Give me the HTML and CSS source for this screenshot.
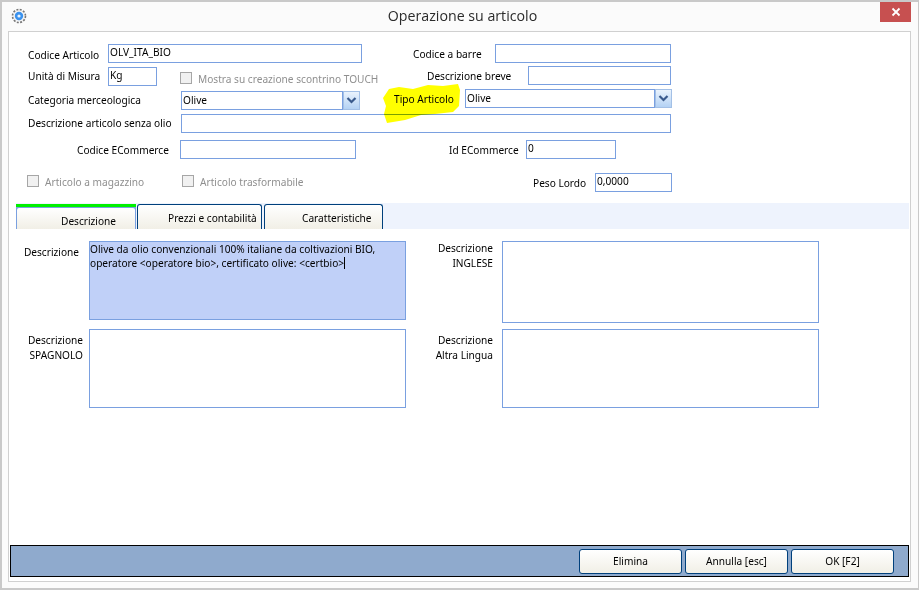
FILE: index.html
```html
<!DOCTYPE html>
<html lang="en">

<head>
  <title>Operazione su articolo</title>
  <meta charset="UTF-8" />
  <link rel="stylesheet" href="styles.css">
</head>

<body>
  <div class="window">
    <div class="titlebar">
      <svg class="app-icon" width="16" height="16" viewBox="0 0 16 16">
        <circle cx="8" cy="8" r="6.5" fill="#f4f4f4" stroke="#777" stroke-width="1.6" stroke-dasharray="2 1.4" />
        <circle cx="8" cy="8" r="4.2" fill="#3b92ee" />
        <circle cx="8" cy="8" r="1.6" fill="#e8f4ff" />
      </svg>
      <span class="title">Operazione su articolo</span>
      <div class="close">
        <svg width="10" height="10" viewBox="0 0 10 10">
          <path d="M1.5 1.5 8.5 8.5M8.5 1.5 1.5 8.5" stroke="#fff" stroke-width="1.8" />
        </svg>
      </div>
    </div>

    <div class="client">
      <div class="row row-1">
        <label class="lbl lbl-codice mt2">Codice Articolo</label>
        <div class="field f-codice">OLV_ITA_BIO</div>
        <label class="lbl lbl-barre mt1">Codice a barre</label>
        <div class="field f-barre"></div>
      </div>

      <div class="row row-2">
        <label class="lbl lbl-codice mt1">Unità di Misura</label>
        <div class="field f-um mt1">Kg</div>
        <span class="check chk-touch"></span>
        <label class="lbl lbl-off lbl-touch mt4">Mostra su creazione scontrino TOUCH</label>
        <label class="lbl lbl-breve mt1">Descrizione breve</label>
        <div class="field f-breve"></div>
      </div>

      <div class="row row-3">
        <label class="lbl lbl-cat mt2">Categoria merceologica</label>
        <div class="combo combo-cat mt2">
          <div class="field">Olive</div>
          <div class="combo-btn">
            <svg width="11" height="7" viewBox="0 0 11 7"><path d="M1.5 1 5.5 5 9.5 1" fill="none" stroke="#3a5a8c" stroke-width="2.2" /></svg>
          </div>
        </div>
        <label class="lbl lbl-tipo mt1">Tipo Articolo</label>
        <div class="combo combo-tipo">
          <div class="field">Olive</div>
          <div class="combo-btn">
            <svg width="11" height="7" viewBox="0 0 11 7"><path d="M1.5 1 5.5 5 9.5 1" fill="none" stroke="#3a5a8c" stroke-width="2.2" /></svg>
          </div>
        </div>
      </div>

      <div class="row row-4">
        <label class="lbl lbl-cat">Descrizione articolo senza olio</label>
        <div class="field f-senza"></div>
      </div>

      <div class="row row-5">
        <label class="lbl lbl-ecom mt1">Codice ECommerce</label>
        <div class="field f-ecom"></div>
        <label class="lbl lbl-id mt1">Id ECommerce</label>
        <div class="field f-id">0</div>
      </div>

      <div class="row row-6">
        <span class="check chk-mag"></span>
        <label class="lbl lbl-off lbl-mag">Articolo a magazzino</label>
        <span class="check chk-tras"></span>
        <label class="lbl lbl-off lbl-tras">Articolo trasformabile</label>
        <label class="lbl lbl-peso mt1">Peso Lordo</label>
        <div class="field f-peso">0,0000</div>
      </div>

      <div class="tabs">
        <div class="tab tab-active"><span>Descrizione</span></div>
        <div class="tab tab-prezzi"><span>Prezzi e contabilità</span></div>
        <div class="tab tab-caratt"><span>Caratteristiche</span></div>
      </div>

      <div class="desc-grid">
        <div class="desc-cell">
          <label class="lbl desc-lbl desc-lbl-first">Descrizione</label>
          <div class="memo memo-selected">Olive da olio convenzionali 100% italiane da coltivazioni BIO, operatore &lt;operatore bio&gt;, certificato olive: &lt;certbio&gt;<span class="caret"></span></div>
        </div>
        <div class="desc-cell">
          <label class="lbl desc-lbl">Descrizione<br />INGLESE</label>
          <div class="memo memo-tall"></div>
        </div>
        <div class="desc-cell">
          <label class="lbl desc-lbl">Descrizione<br />SPAGNOLO</label>
          <div class="memo"></div>
        </div>
        <div class="desc-cell">
          <label class="lbl desc-lbl">Descrizione<br />Altra Lingua</label>
          <div class="memo"></div>
        </div>
      </div>

      <div class="footer">
        <button class="btn">Elimina</button>
        <button class="btn">Annulla [esc]</button>
        <button class="btn">OK [F2]</button>
      </div>
    </div>

    <!-- marker drawn over the screenshot -->
    <svg class="marker" width="78" height="40" viewBox="0 0 78 40">
      <path d="M6 5 16 3 30 5 45 1 60 2 75 0 77 6 76 22 70 28 52 30 38 31 22 36 4 39 1 30 3 22 0 14Z" fill="#ffff00" />
    </svg>
  </div>
</body>

</html>
```

FILE: styles.css
```css
body,
html {
  margin: 0;
  padding: 0;
  border: 0;
}

body {
  width: 919px;
  height: 590px;
  overflow: hidden;
  font-family: "Noto Sans", sans-serif;
  font-size: 10.15px;
  color: #000;
}

.window {
  position: relative;
  box-sizing: border-box;
  width: 919px;
  height: 590px;
  background: #fbfbfb;
  border: 2px solid #c9c9c9;
  border-right-width: 1px;
  border-bottom-width: 2px;
  padding: 0 7px 6px 6px;
  display: flex;
  flex-direction: column;
}

/* title bar */
.titlebar {
  position: relative;
  height: 29px;
  flex: none;
  display: flex;
  justify-content: center;
  align-items: center;
}

.title {
  font-family: "Open Sans", sans-serif;
  font-size: 14.2px;
  color: #2b2b2b;
  margin-left: 6px;
  margin-bottom: 2px;
}

.app-icon {
  position: absolute;
  left: 3px;
  top: 6px;
}

.close {
  position: absolute;
  right: -7px;
  top: 0;
  width: 31px;
  height: 20px;
  margin-right: 7px;
  background: #c75050;
  display: flex;
  align-items: center;
  justify-content: center;
}

/* form */
.client {
  flex: 1;
  box-sizing: border-box;
  background: #fff;
  border: 1px solid #d0d0d0;
  padding: 0 1px 4px 1px;
  display: flex;
  flex-direction: column;
}

.row {
  display: flex;
  align-items: flex-start;
  height: 19px;
  padding-left: 18px;
}

.row-1 { margin-top: 12px; }
.row-2 { margin-top: 3px; }
.row-3 { margin-top: 4px; }
.row-4 { margin-top: 6px; }
.row-5 { margin-top: 7px; }
.row-6 { margin-top: 14px; padding-left: 17px; }

.mt1 { margin-top: 1px; }
.mt2 { margin-top: 2px; }
.mt4 { margin-top: 4px; }

.lbl {
  display: block;
  line-height: 19px;
  white-space: nowrap;
  flex: none;
}

.lbl-off { color: #8f8f8f; }

.field {
  box-sizing: border-box;
  height: 19px;
  flex: none;
  background: #fff;
  border: 1px solid #7aa0e0;
  line-height: 15px;
  padding-left: 1px;
  white-space: nowrap;
}

.lbl-codice { width: 80px; }
.f-codice { width: 254px; }
.lbl-barre { margin-left: 51px; width: 82px; }
.f-barre { width: 176px; }

.f-um { width: 49px; }
.chk-touch { margin: 6px 6px 0 23px; }
.lbl-touch { width: 182px; }
.lbl-breve { margin-left: 47px; width: 101px; }
.f-breve { width: 143px; }

.lbl-cat { width: 153px; }
.combo {
  display: flex;
  flex: none;
}

.combo .field {
  flex: 1;
  line-height: 16px;
}

.combo-cat { width: 179px; }
.lbl-tipo { margin-left: 34px; width: 71px; }
.combo-tipo { width: 207px; }

.combo-btn {
  box-sizing: border-box;
  flex: none;
  width: 17px;
  height: 19px;
  background: linear-gradient(#eaf3fd, #b4d2f4);
  border: 1px solid #a3c0e6;
  display: flex;
  align-items: center;
  justify-content: center;
}

.f-senza { width: 490px; }

.lbl-ecom { margin-left: 49px; width: 103px; }
.f-ecom { width: 176px; }
.lbl-id { margin-left: 93px; width: 77px; }
.f-id { width: 90px; }

.check {
  box-sizing: border-box;
  display: block;
  flex: none;
  width: 12px;
  height: 12px;
  background: #f1f1f1;
  border: 1px solid #a6a6a6;
}

.chk-mag { margin: 2px 6px 0 0; }
.lbl-mag { width: 137px; }
.chk-tras { margin: 2px 6px 0 0; }
.lbl-tras { width: 333px; }
.lbl-peso { width: 62px; }
.f-peso { width: 77px; }

/* tabs */
.tabs {
  box-sizing: border-box;
  display: flex;
  height: 26px;
  margin: 11px 0 0 6px;
  padding-top: 1px;
  background: #eef3fd;
}

.tab {
  box-sizing: border-box;
  flex: none;
  height: 25px;
  background: linear-gradient(#fff, #f1efe6);
  border: 1px solid #00407c;
  border-bottom: none;
  border-radius: 3px 3px 0 0;
  line-height: 26px;
  white-space: nowrap;
}

.tab-active {
  width: 120px;
  border: none;
  border-top: 3px solid #00f000;
  border-radius: 0;
  background: #7aa0e0;
  padding: 1px 1px 0;
  line-height: 27px;
}

.tab-active span {
  display: block;
  height: 100%;
  padding-left: 44px;
  background: linear-gradient(#fff, #f1efe6);
  border-radius: 2px 2px 0 0;
}

.tab-prezzi {
  width: 125px;
  margin-left: 1px;
  padding-left: 30px;
}

.tab-caratt {
  width: 119px;
  margin-left: 2px;
  padding-left: 37px;
}

/* description boxes */
.desc-grid {
  display: grid;
  grid-template-columns: 412px 1fr;
  grid-template-rows: 88px 79px;
  margin-top: 12px;
  padding-left: 6px;
}

.desc-cell {
  display: flex;
  align-items: flex-start;
}

.desc-lbl {
  width: 67px;
  line-height: 15px;
  text-align: right;
  margin-right: 6px;
}

.desc-cell:nth-child(even) .desc-lbl {
  width: 65px;
  margin-right: 9px;
}

.desc-cell:nth-child(n+3) .desc-lbl { margin-top: 4px; }

.desc-lbl.desc-lbl-first {
  width: 63px;
  margin-right: 10px;
  margin-top: 4px;
}

.memo {
  box-sizing: border-box;
  width: 317px;
  height: 79px;
  background: #fff;
  border: 1px solid #7aa0e0;
  padding: 0;
  line-height: 14px;
}

.memo-tall { height: 82px; }
.memo-selected { background: #c0d0f8; }

.caret {
  display: inline-block;
  width: 1px;
  height: 12px;
  background: #000;
  vertical-align: -2px;
}

/* bottom bar */
.footer {
  box-sizing: border-box;
  margin-top: auto;
  height: 32px;
  background: #8faacd;
  border: 1px solid #000;
  display: flex;
  justify-content: flex-end;
  align-items: center;
  gap: 3px;
  padding-right: 14px;
}

.btn {
  width: 103px;
  height: 25px;
  padding: 0;
  font: inherit;
  color: #000;
  background: linear-gradient(#fff, #f1efe6);
  border: 1px solid #00407c;
  border-radius: 3px;
}

.marker {
  position: absolute;
  left: 381px;
  top: 82px;
  mix-blend-mode: multiply;
}
```
